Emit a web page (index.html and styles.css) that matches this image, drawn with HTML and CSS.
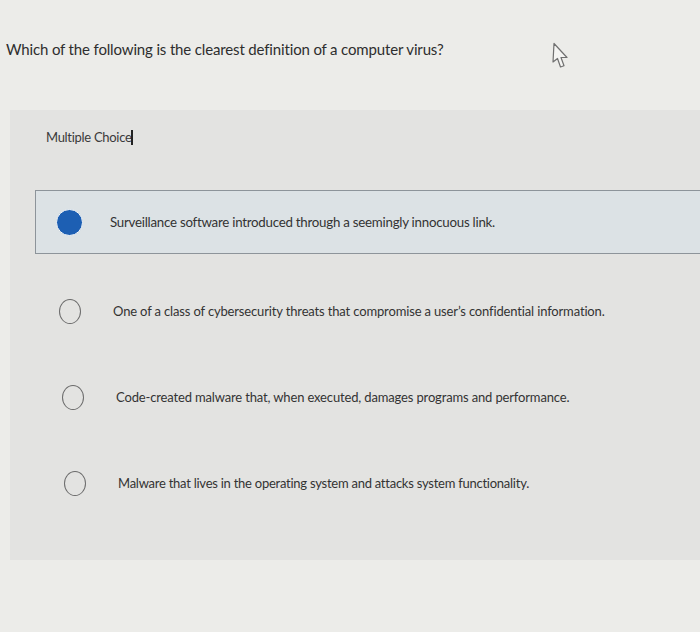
FILE: index.html
```html
<!DOCTYPE html>
<html>
<head>
<meta charset="utf-8">
<link rel="stylesheet" href="styles.css">
</head>
<body>
<div class="page">
  <div class="question-row">
    <p class="question">Which of the following is the clearest definition of a computer virus?</p>
    <svg class="cursor" width="22" height="30" viewBox="0 0 22 30">
      <path d="M3 1.5 L2 20 L6.5 16.5 L9.5 25 L13 23.8 L10 15.5 L16 15.5 Z" fill="#f4f4f2" stroke="#707070" stroke-width="1.2" stroke-linejoin="round"/>
    </svg>
  </div>
  <div class="panel">
    <div class="label">Multiple Choice<span class="caret"></span></div>
    <ul class="options">
      <li class="option selected">
        <span class="radio filled"></span>
        <span class="text">Surveillance software introduced through a seemingly innocuous link.</span>
      </li>
      <li class="option o2">
        <span class="radio"></span>
        <span class="text">One of a class of cybersecurity threats that compromise a user’s confidential information.</span>
      </li>
      <li class="option o3">
        <span class="radio"></span>
        <span class="text">Code-created malware that, when executed, damages programs and performance.</span>
      </li>
      <li class="option o4">
        <span class="radio"></span>
        <span class="text">Malware that lives in the operating system and attacks system functionality.</span>
      </li>
    </ul>
  </div>
</div>
</body>
</html>
```

FILE: styles.css
```css
html, body {
  margin: 0;
  padding: 0;
}
body {
  background: #ecece9;
  font-family: Lato, "Liberation Sans", sans-serif;
  color: #333;
  width: 700px;
  height: 632px;
  overflow: hidden;
}
.page {
  padding-top: 40px;
}
.question-row {
  display: flex;
  align-items: flex-start;
  padding-left: 6px;
  height: 70px;
}
.question {
  margin: 0;
  font-size: 15px;
  line-height: 18px;
  color: #2e2e2e;
  letter-spacing: -0.15px;
}
.cursor {
  margin-left: 107px;
  margin-top: 2px;
}
.panel {
  margin-left: 10px;
  background: #e3e3e1;
  height: 450px;
  padding-top: 18px;
  box-sizing: border-box;
}
.label {
  margin-left: 36px;
  font-size: 13px;
  line-height: 18px;
  color: #3a3a3a;
  letter-spacing: -0.3px;
  display: flex;
  align-items: center;
}
.caret {
  display: inline-block;
  width: 1.5px;
  height: 15px;
  background: #222;
}
.options {
  list-style: none;
  margin: 44px 0 0 0;
  padding: 0;
}
.option {
  display: flex;
  align-items: center;
  height: 86px;
  box-sizing: border-box;
  font-size: 13px;
  letter-spacing: -0.15px;
  color: #333;
}
.option.selected {
  height: 64px;
  margin-left: 25px;
  border: 1px solid #8d949a;
  border-right: none;
  background: #dce2e5;
  padding-left: 20px;
  margin-bottom: 14px;
}
.radio {
  flex: none;
  width: 22px;
  height: 25px;
  border: 1.5px solid #6b6b6b;
  border-radius: 50%;
  box-sizing: border-box;
}
.radio.filled {
  width: 27px;
  height: 27px;
  border: 1.5px solid #f4f6f7;
  background: #1d5fb3;
}
.o2 { margin-left: 49px; }
.o3 { margin-left: 52px; }
.o4 { margin-left: 54px; }
.o4 .text { letter-spacing: -0.25px; }
.option .text {
  margin-left: 32px;
}
.option.selected .text {
  margin-left: 27px;
  font-size: 13.3px;
  letter-spacing: -0.25px;
}
```
